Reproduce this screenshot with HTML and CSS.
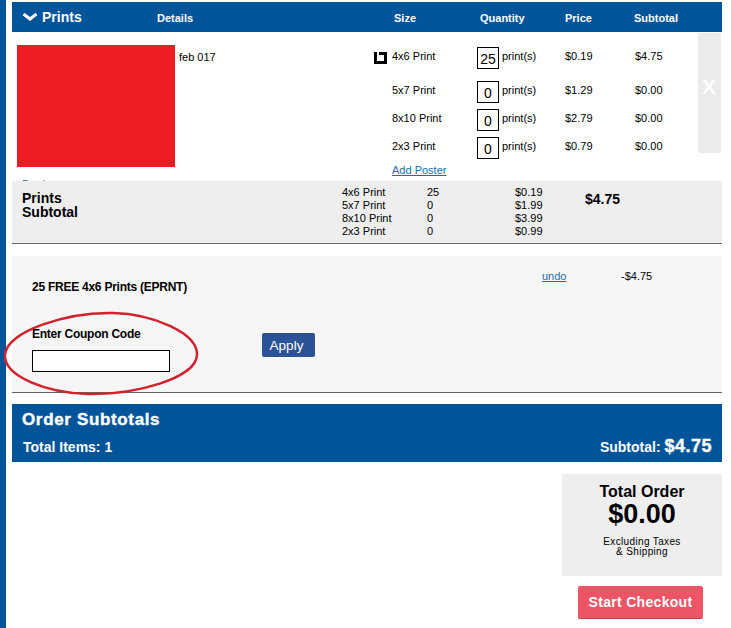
FILE: index.html
```html
<!DOCTYPE html>
<html lang="en">
<head>
  <meta charset="UTF-8">
  <title>Order Summary</title>
  <link rel="stylesheet" href="styles.css">
</head>
<body>

<div class="main">
  <div class="head-bar">
    <div class="head-title">
      <svg class="chevron" width="16" height="10" viewBox="0 0 16 10"><path d="M1.5 2 L8 7 L14.5 2" fill="none" stroke="#fff" stroke-width="3"/></svg>
      Prints
    </div>
    <div class="head-details">Details</div>
    <div class="head-size">Size</div>
    <div class="head-qty">Quantity</div>
    <div class="head-price">Price</div>
    <div class="head-sub">Subtotal</div>
  </div>

  <div class="item">
    <div class="photo-col">
      <div class="photo"></div>
      <a class="photo-link" href="#">Border</a>
    </div>
    <div class="photo-name">feb 017</div>
    <div class="crop-col">
      <svg class="crop-icon" width="13" height="12" viewBox="0 0 13 12"><path d="M0 0H3V9H10V3H5V0H13V12H0Z" fill="#000"/></svg>
    </div>
    <div class="sizes">
      <div class="size-row first">
        <span class="size-name">4x6 Print</span>
        <span class="qty-box">25</span>
        <span class="qty-label">print(s)</span>
        <span class="size-price">$0.19</span>
        <span class="size-sub">$4.75</span>
      </div>
      <div class="size-row">
        <span class="size-name">5x7 Print</span>
        <span class="qty-box small">0</span>
        <span class="qty-label">print(s)</span>
        <span class="size-price">$1.29</span>
        <span class="size-sub">$0.00</span>
      </div>
      <div class="size-row">
        <span class="size-name">8x10 Print</span>
        <span class="qty-box small">0</span>
        <span class="qty-label">print(s)</span>
        <span class="size-price">$2.79</span>
        <span class="size-sub">$0.00</span>
      </div>
      <div class="size-row">
        <span class="size-name">2x3 Print</span>
        <span class="qty-box small">0</span>
        <span class="qty-label">print(s)</span>
        <span class="size-price">$0.79</span>
        <span class="size-sub">$0.00</span>
      </div>
      <a class="add-poster" href="#">Add Poster</a>
    </div>
    <div class="remove">X</div>
  </div>

  <div class="prints-total">
    <div class="prints-total-label">
      <div>Prints</div>
      <div>Subtotal</div>
    </div>
    <div class="total-names">4x6 Print<br>5x7 Print<br>8x10 Print<br>2x3 Print</div>
    <div class="total-qty">25<br>0<br>0<br>0</div>
    <div class="total-prices">$0.19<br>$1.99<br>$3.99<br>$0.99</div>
    <div class="total-amount">$4.75</div>
  </div>

  <div class="coupon">
    <div class="coupon-left">
      <div class="coupon-applied">25 FREE 4x6 Prints (EPRNT)</div>
      <label class="coupon-label" for="code">Enter Coupon Code</label>
      <input class="coupon-input" type="text" id="code">
    </div>
    <button class="apply" type="button">Apply</button>
    <a class="undo" href="#">undo</a>
    <div class="discount">-$4.75</div>
    <svg class="circle" width="196" height="86" viewBox="0 0 196 86"><path d="M110 2 C150 3 195 22 194 44 C193 68 130 84 85 83 C45 82 1 66 2 44 C3 20 65 1 110 2 Z" fill="none" stroke="#d2222e" stroke-width="2.5"/></svg>
  </div>

  <div class="order-bar">
    <div class="order-title">Order Subtotals</div>
    <div class="order-line">
      <span class="order-items">Total Items: 1</span>
      <span class="order-sub">Subtotal: <b>$4.75</b></span>
    </div>
  </div>

  <div class="summary">
    <div class="total-box">
      <div class="total-title">Total Order</div>
      <div class="total-value">$0.00</div>
      <div class="total-note">Excluding Taxes<br>&amp; Shipping</div>
    </div>
    <button class="checkout" type="button">Start Checkout</button>
  </div>
</div>

</body>
</html>
```

FILE: styles.css
```css
html, body {
  height: 100%;
}

body {
  margin: 0;
  background-color: #fff;
  color: #000;
  font-family: "Liberation Sans", Arial, sans-serif;
  font-size: 11px;
  overflow: hidden;
}

.main {
  box-sizing: border-box;
  width: 731px;
  height: 628px;
  padding: 2px 9px 0 12px;
  background: linear-gradient(to right, #00549a 6px, #fff 6px);
}

.head-bar {
  display: flex;
  align-items: center;
  height: 30px;
  background-color: #00549a;
  color: #fff;
  font-weight: bold;
  font-size: 11px;
}

.head-title {
  display: flex;
  align-items: center;
  gap: 4px;
  width: 145px;
  padding-left: 10px;
  box-sizing: border-box;
  font-size: 14px;
}

.head-details { width: 237px; padding-top: 1px; }
.head-size { width: 86px; padding-top: 1px; }
.head-qty { width: 85px; padding-top: 1px; }
.head-price { width: 69px; padding-top: 1px; }
.head-sub { padding-top: 1px; }

.item {
  display: flex;
  height: 149px;
  overflow: hidden;
}

.photo-col {
  width: 167px;
  padding: 13px 0 0 5px;
  box-sizing: border-box;
  flex-shrink: 0;
}

.photo {
  width: 158px;
  height: 122px;
  background-color: #ee1c25;
}

.photo-link {
  display: block;
  margin: 11px 0 0 5px;
  color: #1a6fa8;
}

.photo-name {
  width: 194px;
  padding-top: 19px;
  flex-shrink: 0;
}

.crop-col {
  width: 19px;
  padding-top: 20px;
  flex-shrink: 0;
}

.crop-icon {
  display: block;
  margin-left: 1px;
}

.sizes {
  width: 306px;
  padding-top: 1px;
  flex-shrink: 0;
}

.size-row {
  display: flex;
  align-items: center;
  height: 28px;
}

.size-row.first {
  height: 32px;
  margin: 7px 0 4px;
}

.size-name { width: 85px; }
.qty-label { width: 66px; padding-left: 3px; box-sizing: border-box; }
.size-price { width: 70px; }

.qty-box {
  box-sizing: border-box;
  width: 22px;
  height: 22px;
  margin-top: 4px;
  border: 1px solid #000;
  text-align: center;
  font-size: 14px;
  line-height: 22px;
}

.add-poster {
  display: block;
  margin-top: 4px;
  color: #1a6fa8;
}

.remove {
  width: 23px;
  height: 120px;
  margin-top: 1px;
  background-color: #ebebeb;
  color: #fff;
  font-size: 21px;
  font-weight: bold;
  line-height: 108px;
  text-indent: 4px;
}

.prints-total {
  display: flex;
  height: 63px;
  box-sizing: border-box;
  background-color: #eee;
  border-bottom: 1px solid #666;
}

.prints-total-label {
  width: 330px;
  padding: 10px 0 0 10px;
  box-sizing: border-box;
  font-size: 14px;
  font-weight: bold;
  line-height: 14px;
}

.total-names, .total-qty, .total-prices {
  padding-top: 5px;
  line-height: 13px;
  font-size: 11px;
}

.total-names { width: 85px; }
.total-qty { width: 88px; }
.total-prices { width: 70px; }

.total-amount {
  padding-top: 10px;
  font-size: 14px;
  font-weight: bold;
}

.coupon {
  position: relative;
  display: flex;
  height: 137px;
  box-sizing: border-box;
  margin-top: 12px;
  background-color: #f6f6f6;
  border-bottom: 1px solid #666;
}

.coupon-left {
  width: 250px;
  padding: 24px 0 0 20px;
  box-sizing: border-box;
  flex-shrink: 0;
}

.coupon-applied {
  font-size: 12px;
  font-weight: bold;
  letter-spacing: -0.25px;
}

.coupon-label {
  display: block;
  margin-top: 33px;
  font-size: 12px;
  font-weight: bold;
  letter-spacing: -0.25px;
}

.coupon-input {
  display: block;
  box-sizing: border-box;
  width: 138px;
  height: 22px;
  margin-top: 9px;
  border: 1px solid #000;
  background-color: #fff;
}

.apply {
  box-sizing: border-box;
  width: 53px;
  height: 24px;
  margin-top: 77px;
  padding: 0 4px 0 0;
  border: none;
  border-radius: 2px;
  background-color: #2b5197;
  color: #fff;
  font-family: inherit;
  font-size: 13.5px;
}

.undo {
  margin-left: 227px;
  margin-top: 14px;
  width: 79px;
  color: #1a6fa8;
  font-size: 11px;
  flex-shrink: 0;
}

.discount {
  margin-top: 14px;
  font-size: 11px;
}

.circle {
  position: absolute;
  left: -9px;
  top: 55px;
}

.order-bar {
  height: 58px;
  margin-top: 11px;
  padding: 6px 10px 0 10px;
  box-sizing: border-box;
  background-color: #00549a;
  color: #fff;
}

.order-title {
  font-size: 17px;
  font-weight: bold;
  letter-spacing: 0.65px;
  -webkit-text-stroke: 0.4px #fff;
}

.order-line {
  display: flex;
  justify-content: space-between;
  align-items: baseline;
  margin-top: 6px;
  padding-left: 1px;
  font-size: 14px;
  font-weight: bold;
}

.order-sub b {
  font-size: 18px;
  letter-spacing: 0.5px;
  -webkit-text-stroke: 0.4px #fff;
}

.summary {
  display: flex;
  flex-direction: column;
  align-items: flex-end;
  margin-top: 12px;
}

.total-box {
  box-sizing: border-box;
  width: 160px;
  height: 102px;
  padding-top: 9px;
  background-color: #eee;
  text-align: center;
}

.total-title {
  font-size: 16px;
  font-weight: bold;
  line-height: 18px;
}

.total-value {
  font-size: 27px;
  font-weight: bold;
  line-height: 26px;
}

.total-note {
  margin-top: 10px;
  font-size: 10px;
  line-height: 10px;
  letter-spacing: 0.35px;
}

.checkout {
  box-sizing: border-box;
  width: 125px;
  height: 33px;
  margin: 10px 19px 0 0;
  border: none;
  border-bottom: 1px solid #c9404c;
  border-radius: 2px;
  background-color: #ec5565;
  color: #fff;
  font-family: inherit;
  font-size: 14px;
  font-weight: bold;
  letter-spacing: 0.3px;
}
```
